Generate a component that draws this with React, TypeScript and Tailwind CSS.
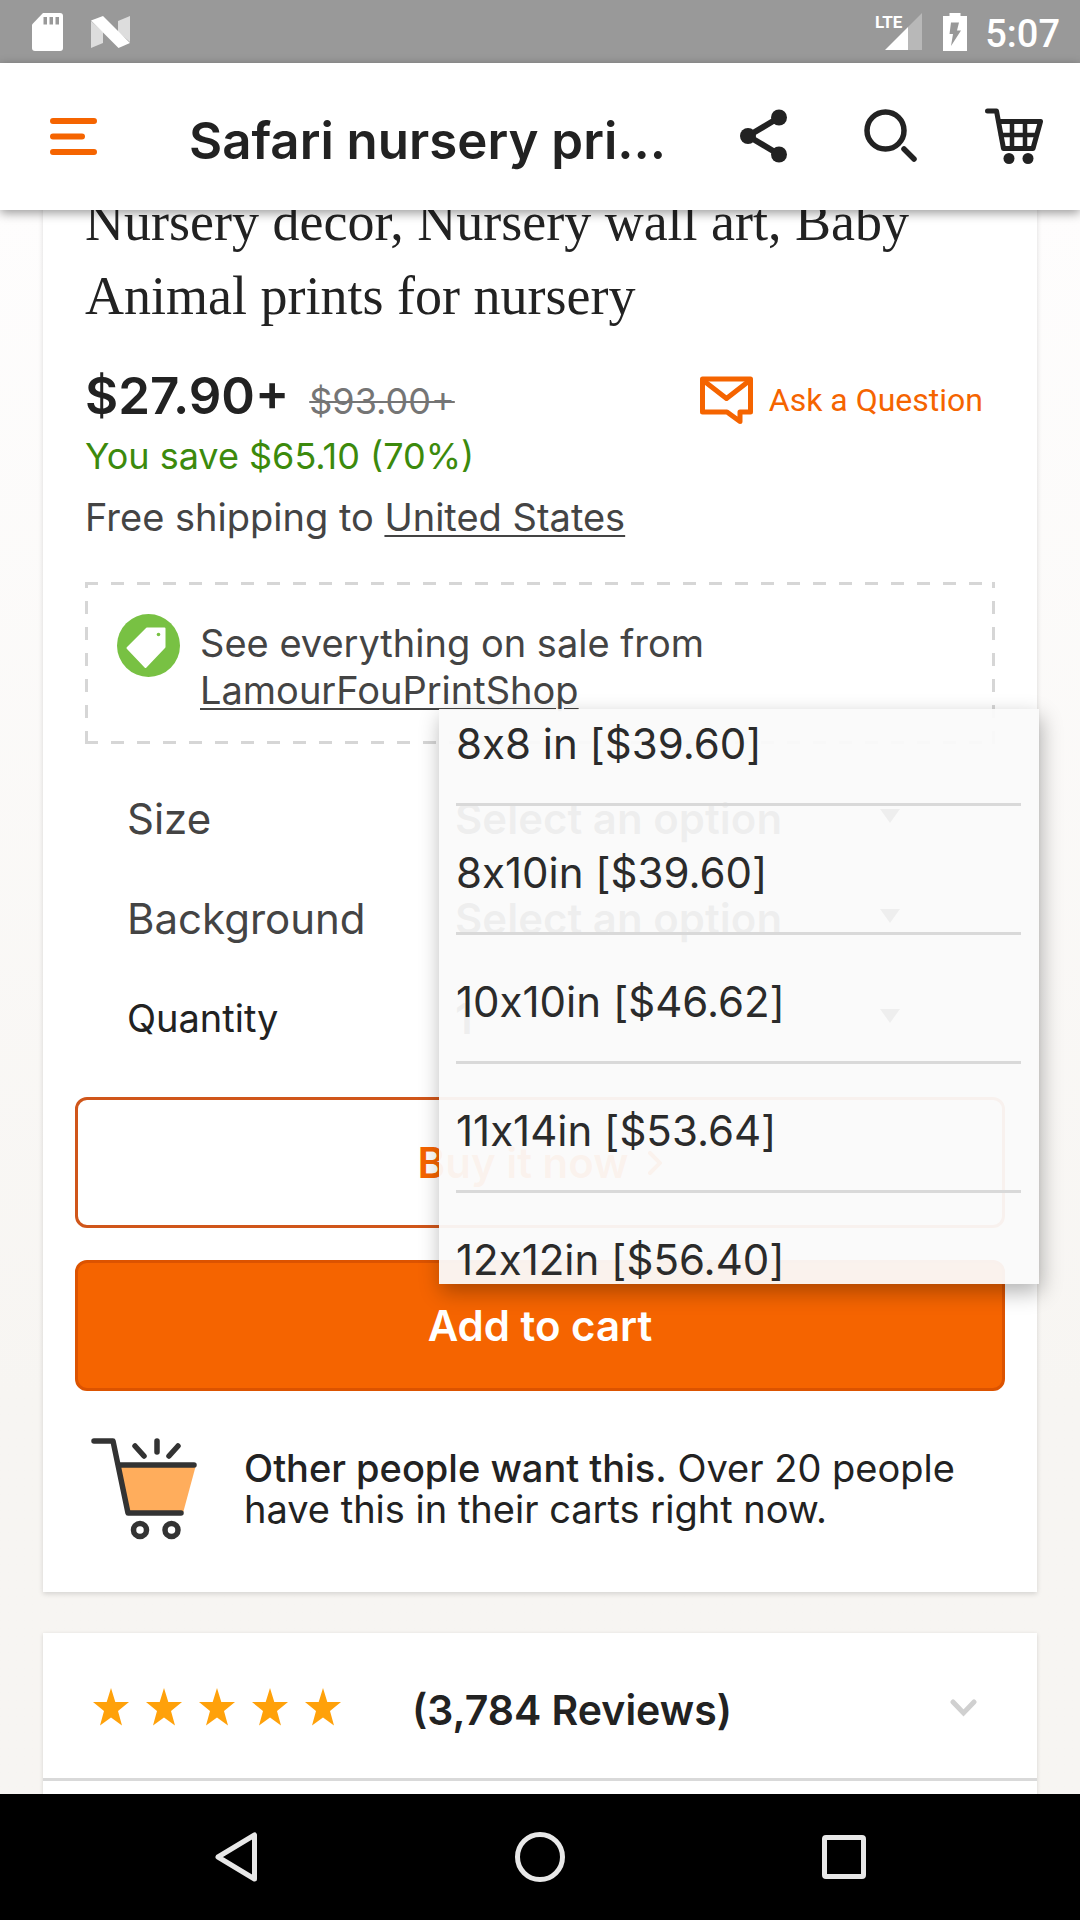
import React from "react";

const sizes = [
  "8x8 in [$39.60]",
  "8x10in [$39.60]",
  "10x10in [$46.62]",
  "11x14in [$53.64]",
  "12x12in [$56.40]",
];

function StatusBar() {
  return (
    <div className="flex h-[63px] shrink-0 items-center justify-between bg-[#999999] pl-8 pr-5 text-white">
      <div className="flex items-center gap-7">
        <svg width="31" height="38" viewBox="0 0 31 38" aria-label="SD card">
          <path fill="#fff" d="M11 0H28a3 3 0 0 1 3 3V35a3 3 0 0 1-3 3H3a3 3 0 0 1-3-3V11.500Z" />
          <path fill="#999" d="M11.500 4h3.500v7.500h-3.500zM17.500 4h3.500v7.500h-3.500zM23.500 4h3.500v7.500h-3.500z" />
        </svg>
        <svg width="39" height="32" viewBox="0 0 39 32" aria-label="Notification">
          <path fill="#ddd" d="M0 5L12 16V27L0 32ZM39 0V26L27 16V5Z" />
          <path fill="#fff" d="M0 4.500L12 0L39 27L27.500 32Z" />
        </svg>
      </div>
      <div className="flex items-center">
        <svg width="50" height="40" viewBox="0 0 50 40" aria-label="LTE signal">
          <path fill="#b8b8b8" d="M49 1V38H35V15Z" />
          <path fill="#fff" d="M35 15V38H12Z" />
          <text x="2" y="16" fill="#fff" fontFamily="Roboto, sans-serif" fontSize="17" fontWeight="700">LTE</text>
        </svg>
        <svg className="ml-5" width="24" height="38" viewBox="0 0 24 38" aria-label="Battery charging">
          <path fill="#fff" d="M6.500 0H17.500V3H24V38H0V3H6.500Z" />
          <path fill="#999" d="M8 9.500H16L14 17.500H18L8 33L10 21H6.500Z" />
        </svg>
        <span className="ml-[18px] pt-1 font-['Roboto',sans-serif] text-[38px] font-medium leading-[48px]">5:07</span>
      </div>
    </div>
  );
}

function AppBar() {
  return (
    <header className="relative z-10 flex h-[147px] shrink-0 items-center bg-white pl-[50px] pr-9 shadow-[0_3px_10px_rgba(0,0,0,0.4)]">
      <button type="button" aria-label="Menu">
        <svg width="48" height="40" viewBox="0 0 48 40" stroke="#f56400" strokeWidth="6" strokeLinecap="round">
          <path d="M3 4H44M3 19.500H32M3 35H44" />
        </svg>
      </button>
      <h1 className="ml-[91px] min-w-0 flex-1 truncate pt-2 text-[51px] font-semibold leading-[64px]">Safari nursery pri...</h1>
      <div className="flex items-center">
        <button type="button" aria-label="Share">
          <svg width="48" height="56" viewBox="0 0 48 56" fill="#222">
            <path d="M8 27L39 8.500M8 27L39 45.500" stroke="#222" strokeWidth="6" />
            <circle cx="8" cy="27" r="8" />
            <circle cx="39" cy="8.500" r="8" />
            <circle cx="39" cy="45.500" r="8" />
          </svg>
        </button>
        <button type="button" aria-label="Search" className="ml-[76px]">
          <svg width="54" height="56" viewBox="0 0 54 56" fill="none" stroke="#222" strokeLinecap="round">
            <circle cx="21.500" cy="21.500" r="18.500" strokeWidth="5.500" />
            <path d="M40 40L50 50" strokeWidth="5.500" />
          </svg>
        </button>
        <button type="button" aria-label="Cart" className="ml-[66px]">
          <svg width="60" height="58" viewBox="0 0 60 58" fill="none" stroke="#222" strokeWidth="5" strokeLinecap="round" strokeLinejoin="round">
            <path d="M3.500 3H12.500L19.500 40.500H49L56.500 13.500H15" />
            <path d="M17 27H52M28 14V40M41 14V40" strokeWidth="4.500" />
            <circle cx="25" cy="50.500" r="5.500" fill="#222" stroke="none" />
            <circle cx="44" cy="50.500" r="5.500" fill="#222" stroke="none" />
          </svg>
        </button>
      </div>
    </header>
  );
}

function SaleBanner() {
  return (
    <div className="mx-[42px] mt-[41px] flex h-[162px] bg-[image:repeating-linear-gradient(90deg,#d6d6d6_0_13px,transparent_13px_26px),repeating-linear-gradient(90deg,#d6d6d6_0_13px,transparent_13px_26px),repeating-linear-gradient(0deg,#d6d6d6_0_13px,transparent_13px_26px),repeating-linear-gradient(0deg,#d6d6d6_0_13px,transparent_13px_26px)] bg-[length:100%_3px,100%_3px,3px_100%,3px_100%] bg-[position:top,bottom,left,right] bg-no-repeat pl-8 pt-8">
      <svg className="shrink-0" width="63" height="63" viewBox="0 0 63 63">
        <circle cx="31.500" cy="31.500" r="31.500" fill="#78c143" />
        <path fill="#fff" stroke="#fff" strokeWidth="2" strokeLinejoin="round" d="M30 14.500H47.500V33L28.500 53L10.500 34Z" />
        <circle cx="41.500" cy="20.500" r="1.800" fill="#78c143" />
      </svg>
      <p className="ml-5 mt-1.5 text-[38px] leading-[47px] text-[#444]">
        See everything on sale from
        <br />
        <a href="#shop" className="underline decoration-2 underline-offset-4">LamourFouPrintShop</a>
      </p>
    </div>
  );
}

type FieldProps = { id: string; label: string; value: string; small?: boolean };

function OptionField({ id, label, value, small }: FieldProps) {
  return (
    <div className="flex h-[100px] items-center pl-[84px] pr-[77px]">
      <label
        htmlFor={id}
        className={small ? "w-[328px] shrink-0 text-[38px] text-[#222]" : "w-[328px] shrink-0 text-[42px] text-[#444]"}
      >
        {label}
      </label>
      <div className="flex flex-1 items-center">
        <select id={id} className="w-full appearance-none bg-transparent text-[42px] font-semibold text-[#222]">
          <option>{value}</option>
        </select>
        <svg className="-ml-20 mb-1 shrink-0" width="20" height="14" viewBox="0 0 20 14">
          <path d="M0 0H20L10 14Z" fill="#222" />
        </svg>
      </div>
    </div>
  );
}

function SizeMenu() {
  return (
    <div
      role="listbox"
      aria-label="Size"
      className="absolute -right-0.5 left-[396px] -top-[59px] h-[575px] overflow-hidden bg-[#fafafa]/95 pl-[17px] pr-[18px] shadow-[2px_8px_20px_rgba(0,0,0,0.3)]"
    >
      <div className="-mt-8">
        {sizes.map((s) => (
          <button
            key={s}
            type="button"
            role="option"
            aria-selected="false"
            className="block h-[129px] w-full border-b-[3px] border-[#d9d9d9] pt-1.5 text-left text-[42px] text-[#2b2b2b] [font-feature-settings:'calt'_0]"
          >
            {s}
          </button>
        ))}
      </div>
    </div>
  );
}

function ListingCard() {
  return (
    <section className="bg-white pb-[51px] shadow-[0_2px_5px_rgba(0,0,0,0.14)]">
      <div className="px-[42px]">
        <h2 className="-mt-[25px] font-['Liberation_Serif',serif] text-[54px] leading-[74px]">
          Nursery decor, Nursery wall art, Baby
          <br />
          Animal prints for nursery
        </h2>
        <div className="mt-[31px] flex items-baseline">
          <span className="text-[51px] font-semibold leading-[64px]">$27.90+</span>
          <s className="ml-5 text-[36px] text-[#757575] decoration-2">$93.00+</s>
          <a href="#ask" className="ml-auto mr-3 mt-2 flex items-center gap-4 self-center font-['Roboto',sans-serif] text-[32px] leading-9 text-[#f56400]">
            <svg width="54" height="50" viewBox="0 0 54 50" fill="none" stroke="#f56400" strokeWidth="5" strokeLinejoin="round">
              <path d="M3.500 4H51.500V37H41V46.500L28 37H3.500Z" />
              <path d="M5 6L27.500 23.500L50 6" />
            </svg>
            Ask a Question
          </a>
        </div>
        <p className="mt-1 text-[36px] leading-[48px] text-[#3c8a0c]">You save $65.10 (70%)</p>
        <p className="mt-[13px] text-[38px] leading-[48px] text-[#444]">
          Free shipping to{" "}
          <a href="#country" className="underline decoration-2 underline-offset-4">United States</a>
        </p>
      </div>
      <SaleBanner />
      <div className="relative mt-6">
        <OptionField id="size" label="Size" value="Select an option" />
        <OptionField id="background" label="Background" value="Select an option" />
        <OptionField id="quantity" label="Quantity" value="1" small />
        <div className="mt-[29px] flex flex-col gap-8 px-8 text-[42px] font-semibold">
          <button type="button" className="flex h-[131px] items-center justify-center gap-5 rounded-xl border-[3px] border-[#d0561a] text-[#f56400]">
            Buy it now
            <svg width="14" height="24" viewBox="0 0 14 24" fill="none" stroke="#f56400" strokeWidth="4" strokeLinecap="round">
              <path d="M2 2L12 12L2 22" />
            </svg>
          </button>
          <button type="button" className="h-[131px] rounded-xl border-[3px] border-[#dc5300] bg-[#f56400] text-white">
            Add to cart
          </button>
        </div>
        <SizeMenu />
      </div>
      <div className="mt-[46px] flex items-center pl-12 pr-[42px]">
        <svg className="shrink-0" width="107" height="104" viewBox="0 0 107 104" fill="none" stroke="#333" strokeWidth="5.500" strokeLinecap="round" strokeLinejoin="round">
          <path d="M27 28H105L92 76H37Z" fill="#ffad5c" stroke="none" />
          <path d="M3 4H22L37 76H90M29 28H103M44 9L53 19M66 4V15M87 9L78 19" />
          <circle cx="49" cy="93" r="6.500" />
          <circle cx="80.500" cy="93" r="6.500" />
        </svg>
        <p className="ml-[46px] text-[38px] leading-[41px]">
          <b className="font-medium">Other people want this.</b> Over 20 people
          <br />
          have this in their carts right now.
        </p>
      </div>
    </section>
  );
}

function ReviewsCard() {
  return (
    <section className="mt-[41px] bg-white shadow-[0_1px_4px_rgba(0,0,0,0.14)]">
      <button type="button" className="flex h-[148px] w-full items-center border-b-[3px] border-[#d9d9d9] pl-[50px] pr-[60px]">
        <span className="flex gap-[17px] pt-0.5" role="img" aria-label="5 out of 5 stars">
          {[0, 1, 2, 3, 4].map((i) => (
            <svg key={i} width="36" height="38" viewBox="0 0 36 38" fill="#ffa10a">
              <path d="M18 0L22.300 14H36L25 23L29 37.500L18 29.500L7 37.500L11 23L0 14H13.700Z" />
            </svg>
          ))}
        </span>
        <span className="ml-[71px] pt-2.5 text-[41px] font-semibold">(3,784 Reviews)</span>
        <svg className="ml-auto" width="27" height="22" viewBox="0 0 27 22" fill="none" stroke="#d0d0d0" strokeWidth="5" strokeLinecap="round">
          <path d="M3 7L13.500 18L24 7" />
        </svg>
      </button>
      <div className="h-24" />
    </section>
  );
}

function NavBar() {
  return (
    <nav className="grid h-[126px] shrink-0 grid-cols-[1fr_auto_1fr] items-center bg-black">
      <button type="button" aria-label="Back" className="ml-[214px] justify-self-start">
        <svg width="46" height="52" viewBox="0 0 46 52" fill="none" stroke="#e8e8e8" strokeWidth="5" strokeLinejoin="round">
          <path d="M4 26L40.500 4V48Z" />
        </svg>
      </button>
      <button type="button" aria-label="Home" className="h-[50px] w-[50px] rounded-full border-[5px] border-[#e8e8e8]" />
      <button type="button" aria-label="Recent apps" className="mr-[214px] h-11 w-11 justify-self-end rounded-sm border-[5px] border-[#e8e8e8]" />
    </nav>
  );
}

export default function App() {
  return (
    <div className="flex h-screen flex-col overflow-hidden bg-[#f7f5f2] font-['Inter','Liberation_Sans',sans-serif] text-[#222]">
      <StatusBar />
      <AppBar />
      <main className="min-h-0 flex-1 overflow-hidden bg-linear-to-b from-[#fefdfd] to-[#f7f5f2] to-75% px-[43px]">
        <ListingCard />
        <ReviewsCard />
      </main>
      <NavBar />
    </div>
  );
}
